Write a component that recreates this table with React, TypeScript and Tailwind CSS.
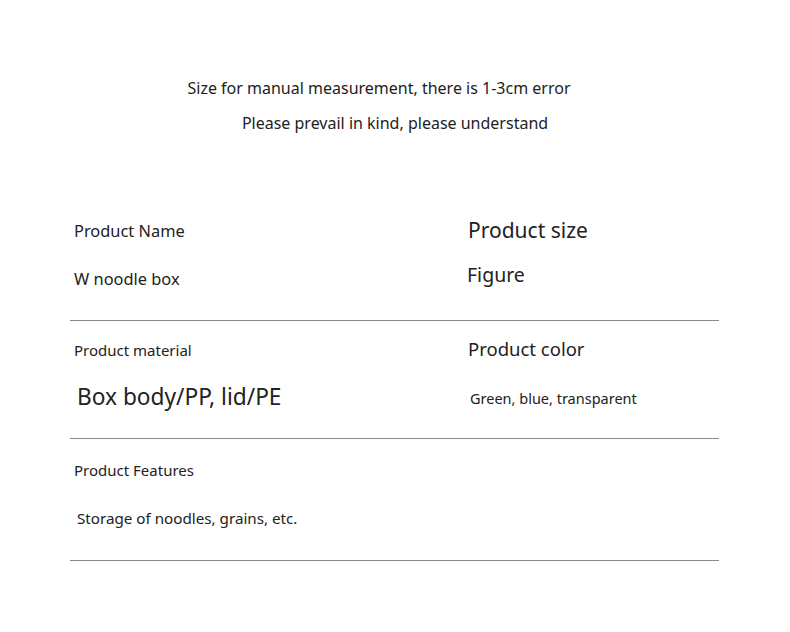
export default function App() {
  const font = { fontFamily: '"Noto Sans", "Open Sans", sans-serif' };
  return (
    <div className="w-[790px] h-[632px] bg-white text-[#222]" style={font}>
      <div className="pt-[76px] flex flex-col items-center">
        <div className="text-[16px] leading-[24px] ml-[-32px]">Size for manual measurement, there is 1-3cm error</div>
        <div className="text-[16px] leading-[24px] mt-[11px] ml-[0px]">Please prevail in kind, please understand</div>
      </div>
      <div className="ml-[70px] w-[649px] mt-[62px]">
        <div className="flex h-[124px] border-b border-[#8a8a8a]">
          <div className="w-[398px] pl-[4px] flex flex-col">
            <div className="text-[16.4px] leading-[24px] mt-[22px]">Product Name</div>
            <div className="text-[16.4px] leading-[24px] mt-[24px]">W noodle box</div>
          </div>
          <div className="flex-1 flex flex-col">
            <div className="text-[21px] leading-[28px] mt-[19px]">Product size</div>
            <div className="text-[19.5px] leading-[28px] mt-[17px] ml-[-1px]">Figure</div>
          </div>
        </div>
        <div className="flex h-[118px] border-b border-[#8a8a8a]">
          <div className="w-[398px] pl-[4px] flex flex-col">
            <div className="text-[15px] leading-[22px] mt-[18px]">Product material</div>
            <div className="text-[22.7px] leading-[30px] mt-[21px] ml-[3px]">Box body/PP, lid/PE</div>
          </div>
          <div className="flex-1 flex flex-col">
            <div className="text-[18.5px] leading-[26px] mt-[15px]">Product color</div>
            <div className="text-[14.5px] leading-[20px] mt-[26px] ml-[2px]">Green, blue, transparent</div>
          </div>
        </div>
        <div className="flex h-[122px] border-b border-[#8a8a8a]">
          <div className="w-[398px] pl-[4px] flex flex-col">
            <div className="text-[15px] leading-[22px] mt-[20px]">Product Features</div>
            <div className="text-[15.2px] leading-[22px] mt-[26px] ml-[3px]">Storage of noodles, grains, etc.</div>
          </div>
        </div>
      </div>
    </div>
  );
}
